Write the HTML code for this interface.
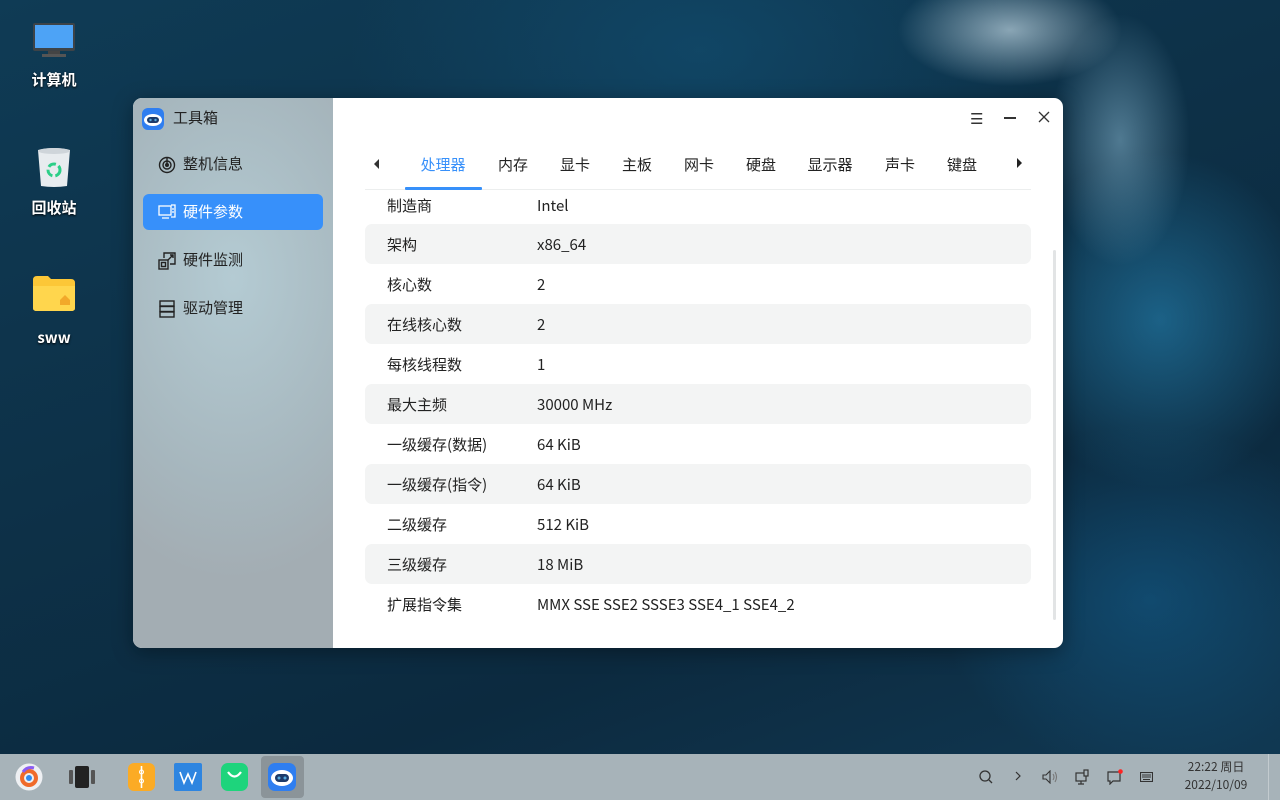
<!DOCTYPE html>
<html><head><meta charset="utf-8">
<style>
*{margin:0;padding:0;box-sizing:border-box}
body{width:1280px;height:800px;overflow:hidden;position:relative;font-family:"Noto Sans CJK SC","Liberation Sans",sans-serif;
background:
radial-gradient(ellipse 160px 80px at 1010px 30px,rgba(220,240,250,.6),transparent 70%),
radial-gradient(ellipse 100px 180px at 1120px 140px,rgba(160,210,235,.45),transparent 70%),
radial-gradient(ellipse 220px 240px at 1160px 320px,rgba(40,140,190,.55),transparent 70%),
radial-gradient(ellipse 300px 250px at 1150px 600px,rgba(20,100,150,.5),transparent 70%),
radial-gradient(ellipse 500px 300px at 700px 50px,rgba(20,90,130,.45),transparent 70%),
linear-gradient(160deg,#0f3b55 0%,#0d3148 40%,#0c2a3f 70%,#113a55 100%);}
.dicon{position:absolute;left:14px;width:80px;text-align:center;color:#fff;font-size:15px;font-weight:bold;text-shadow:0 1px 2px #000}
.win{position:absolute;left:133px;top:98px;width:930px;height:550px;border-radius:9px;overflow:hidden;box-shadow:0 4px 20px rgba(0,0,0,.35);background:#fff}
.side{position:absolute;left:0;top:0;width:200px;height:550px;background:radial-gradient(ellipse 200px 300px at 100px 180px,#b4cbd3,#a6b6bd 70%,#a3adb3)}
.nav{position:absolute;left:10px;width:180px;height:36px;border-radius:6px;color:#222;font-size:15px;line-height:36px;padding-left:40px}
.nav svg{position:absolute;left:15px;top:10px}
.sel{background:#3790fa;color:#fff}
.tab{position:absolute;top:154px;font-size:15px;color:#222;transform:translateX(-50%)}
.row{position:absolute;left:365px;width:666px;height:40px;border-radius:7px;font-size:15px;color:#222;line-height:40px}
.row.g{background:#f3f4f4}
.row span{position:absolute;left:22px;top:1px}
.row b{position:absolute;left:172px;top:1px;font-weight:normal}
.task{position:absolute;left:0;top:754px;width:1280px;height:46px;background:#a7b3b9}
</style></head><body>

<div class="dicon" style="top:22px">
<svg width="44" height="36" viewBox="0 0 44 36"><rect x="1" y="1" width="42" height="28" rx="2" fill="#3d4348"/><rect x="3" y="3" width="38" height="23" fill="#4da3f6"/><rect x="16" y="29" width="12" height="3" fill="#444"/><rect x="10" y="32" width="24" height="3" fill="#555"/></svg>
<div style="margin-top:6px">计算机</div></div>
<div class="dicon" style="top:146px">
<svg width="40" height="42" viewBox="0 0 40 42"><path d="M4 4 Q20 0 36 4 L33 40 Q20 42 7 40Z" fill="#e8ecef"/><ellipse cx="20" cy="5" rx="16" ry="3" fill="#cfd5da"/><circle cx="20" cy="24" r="6" fill="none" stroke="#2ccf88" stroke-width="3" stroke-dasharray="8 3"/></svg>
<div style="margin-top:4px">回收站</div></div>
<div class="dicon" style="top:274px">
<svg width="44" height="38" viewBox="0 0 44 38"><path d="M1 6 Q1 2 5 2 H16 L19 5 H39 Q43 5 43 9 V34 Q43 37 39 37 H5 Q1 37 1 34Z" fill="#fcc737"/><path d="M1 12 H43 V34 Q43 37 39 37 H5 Q1 37 1 34Z" fill="#ffd64d"/><path d="M28 26 L33 21 L38 26 V31 H28Z" fill="#f2a92a"/></svg>
<div style="margin-top:10px">sww</div></div>

<div class="win">
 <div class="side">
  <svg style="position:absolute;left:9px;top:10px" width="22" height="22" viewBox="0 0 22 22"><rect width="22" height="22" rx="6" fill="#2f7ef0"/><ellipse cx="11" cy="12" rx="9" ry="6" fill="#fff"/><rect x="5" y="9" width="12" height="6" rx="3" fill="#1d3a6a"/><circle cx="8.5" cy="12" r="1.2" fill="#5ad"/><circle cx="13.5" cy="12" r="1.2" fill="#5ad"/></svg>
  <div style="position:absolute;left:40px;top:9px;font-size:15px;color:#222">工具箱</div>
  <div class="nav" style="top:48px"><svg width="18" height="18" viewBox="0 0 18 18" fill="none" stroke="#222" stroke-width="1.4"><circle cx="9" cy="9" r="7.5"/><circle cx="9" cy="9" r="4"/><circle cx="9" cy="9" r="1.3" fill="#222"/><path d="M9 1.5V9"/></svg>整机信息</div>
  <div class="nav sel" style="top:96px"><svg width="18" height="16" viewBox="0 0 18 16" fill="none" stroke="#fff" stroke-width="1.3"><rect x="1" y="2" width="12" height="9"/><path d="M4 14h7M13 1h4v12h-4M14 5h2M14 8h2"/></svg>硬件参数</div>
  <div class="nav" style="top:144px"><svg width="18" height="18" viewBox="0 0 18 18" fill="none" stroke="#222" stroke-width="1.4"><rect x="1" y="8" width="9" height="9"/><rect x="3.5" y="10.5" width="4" height="4"/><path d="M6 6V1h11v11h-5M10 8l5-5M12 3h3v3"/></svg>硬件监测</div>
  <div class="nav" style="top:192px"><svg width="18" height="18" viewBox="0 0 18 18" fill="none" stroke="#222" stroke-width="1.4"><rect x="2" y="1" width="14" height="5"/><rect x="2" y="6.5" width="14" height="5"/><rect x="2" y="12" width="14" height="5"/></svg>驱动管理</div>
 </div>
 <div style="position:absolute;left:837px;top:10px;font-size:15px;color:#333">☰</div>
 <div style="position:absolute;left:871px;top:19px;width:12px;height:1.5px;background:#333"></div>
 <svg style="position:absolute;left:905px;top:13px" width="12" height="12" viewBox="0 0 12 12" stroke="#333" stroke-width="1.3"><path d="M1 1L11 11M11 1L1 11"/></svg>
</div>

<svg style="position:absolute;left:374px;top:159px" width="6" height="10"><path d="M5 0L0 5L5 10Z" fill="#333"/></svg>
<svg style="position:absolute;left:1017px;top:158px" width="6" height="10"><path d="M0 0L5 5L0 10Z" fill="#222"/></svg>
<div class="tab" style="left:443px;color:#3790fa">处理器</div>
<div class="tab" style="left:513px">内存</div>
<div class="tab" style="left:575px">显卡</div>
<div class="tab" style="left:637px">主板</div>
<div class="tab" style="left:699px">网卡</div>
<div class="tab" style="left:761px">硬盘</div>
<div class="tab" style="left:830px">显示器</div>
<div class="tab" style="left:900px">声卡</div>
<div class="tab" style="left:962px">键盘</div>
<div style="position:absolute;left:365px;top:189px;width:666px;height:1px;background:#eceeee"></div>
<div style="position:absolute;left:405px;top:187px;width:77px;height:3px;background:#3790fa;border-radius:1px"></div>

<div class="row" style="top:185px"><span>制造商</span><b>Intel</b></div>
<div class="row g" style="top:224px"><span>架构</span><b>x86_64</b></div>
<div class="row" style="top:264px"><span>核心数</span><b>2</b></div>
<div class="row g" style="top:304px"><span>在线核心数</span><b>2</b></div>
<div class="row" style="top:344px"><span>每核线程数</span><b>1</b></div>
<div class="row g" style="top:384px"><span>最大主频</span><b>30000 MHz</b></div>
<div class="row" style="top:424px"><span>一级缓存(数据)</span><b>64 KiB</b></div>
<div class="row g" style="top:464px"><span>一级缓存(指令)</span><b>64 KiB</b></div>
<div class="row" style="top:504px"><span>二级缓存</span><b>512 KiB</b></div>
<div class="row g" style="top:544px"><span>三级缓存</span><b>18 MiB</b></div>
<div class="row" style="top:584px"><span>扩展指令集</span><b>MMX SSE SSE2 SSSE3 SSE4_1 SSE4_2</b></div>
<div style="position:absolute;left:1053px;top:250px;width:3px;height:370px;background:#e2e4e5;border-radius:2px"></div>

<div class="task">
 <svg style="position:absolute;left:15px;top:9px" width="28" height="28" viewBox="0 0 28 28"><circle cx="14" cy="14" r="13.5" fill="#eef0f3"/><circle cx="14" cy="15" r="7" fill="none" stroke="#f06a2a" stroke-width="4"/><path d="M8 9 Q12 3 19 5" stroke="#8a5cf0" stroke-width="3" fill="none"/><circle cx="14" cy="15" r="3" fill="#2f8af0"/></svg>
 <div style="position:absolute;left:69px;top:16px;width:4px;height:14px;background:#555;border-radius:1px"></div>
 <div style="position:absolute;left:75px;top:12px;width:14px;height:22px;background:#222;border-radius:2px"></div>
 <div style="position:absolute;left:91px;top:16px;width:4px;height:14px;background:#555;border-radius:1px"></div>
 <svg style="position:absolute;left:128px;top:9px" width="27" height="28" viewBox="0 0 27 28"><rect width="27" height="28" rx="6" fill="#fbab25"/><path d="M13.5 3V25" stroke="#fff" stroke-width="1.6"/><circle cx="13.5" cy="9" r="2" fill="none" stroke="#fff"/><circle cx="13.5" cy="18" r="2" fill="none" stroke="#fff"/></svg>
 <svg style="position:absolute;left:174px;top:9px" width="28" height="28" viewBox="0 0 28 28"><rect width="28" height="28" rx="2" fill="#2e85e0"/><path d="M6 9L10 20L14 11L18 20L22 9" stroke="#fff" stroke-width="1.6" fill="none"/></svg>
 <svg style="position:absolute;left:221px;top:9px" width="27" height="28" viewBox="0 0 27 28"><rect width="27" height="28" rx="7" fill="#1ed47c"/><path d="M7 9Q13.5 18 20 9" stroke="#fff" stroke-width="2.2" fill="none"/></svg>
 <div style="position:absolute;left:261px;top:2px;width:43px;height:42px;background:#8b9499;border-radius:4px"></div>
 <svg style="position:absolute;left:268px;top:9px" width="28" height="28" viewBox="0 0 28 28"><rect width="28" height="28" rx="7" fill="#2f7ef0"/><ellipse cx="14" cy="15" rx="11" ry="8" fill="#fff"/><rect x="7" y="11" width="14" height="8" rx="4" fill="#1d3a6a"/><circle cx="11" cy="15" r="1.5" fill="#5ad"/><circle cx="17" cy="15" r="1.5" fill="#5ad"/></svg>
 <svg style="position:absolute;left:979px;top:16px" width="14" height="14" viewBox="0 0 14 14" fill="none" stroke="#333" stroke-width="1.3"><circle cx="6" cy="6" r="5"/><path d="M10 10l3 3"/></svg>
 <svg style="position:absolute;left:1015px;top:17px" width="6" height="10" fill="none" stroke="#333" stroke-width="1.2"><path d="M1 1l4 4l-4 4"/></svg>
 <svg style="position:absolute;left:1042px;top:16px" width="16" height="14" fill="none" stroke="#333" stroke-width="1.1"><path d="M1 5h3l4-4v12l-4-4H1z"/><path d="M11 4q2 3 0 6M13 2q3 5 0 10" stroke="#777"/></svg>
 <svg style="position:absolute;left:1075px;top:15px" width="14" height="16" fill="none" stroke="#333" stroke-width="1.2"><rect x="1" y="4" width="10" height="8"/><path d="M6 12v3M3 15h6"/><rect x="9" y="1" width="4" height="6" fill="#a7b3b9"/></svg>
 <svg style="position:absolute;left:1107px;top:15px" width="16" height="16" fill="none" stroke="#333" stroke-width="1.2"><path d="M1 3h12v9H6l-3 3v-3H1z"/><circle cx="13.5" cy="2.5" r="2.3" fill="#f22" stroke="none"/></svg>
 <svg style="position:absolute;left:1140px;top:18px" width="13" height="10" fill="none" stroke="#333" stroke-width="1.1"><rect x=".5" y=".5" width="12" height="9"/><path d="M2 3h9M2 5h9M3 7.5h7"/></svg>
 <div style="position:absolute;left:1180px;top:4px;width:72px;text-align:center;font-size:12px;color:#333;line-height:18px">22:22 周日<br>2022/10/09</div>
 <div style="position:absolute;left:1268px;top:0;width:1px;height:46px;background:#c3cbcf"></div>
</div>
</body></html>
